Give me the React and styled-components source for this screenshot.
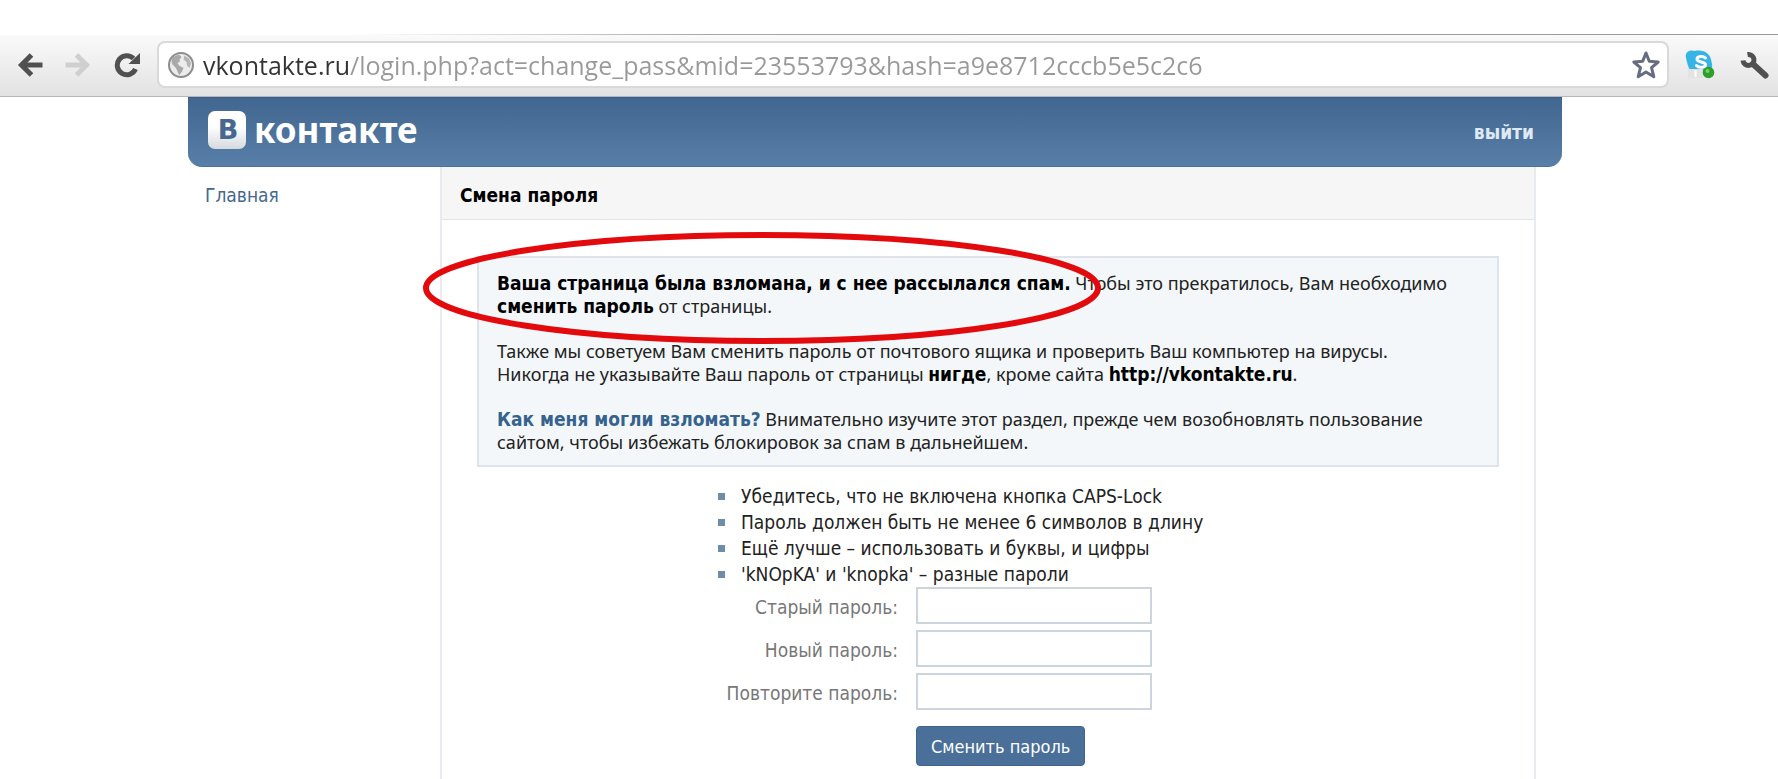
import { useState } from "react";
import styled, { createGlobalStyle } from "styled-components";

const GlobalStyle = createGlobalStyle`
  * {
    box-sizing: border-box;
  }

  body {
    margin: 0;
    background: #fff;
    color: #222;
    font-family: "DejaVu Sans Condensed", "Noto Sans", sans-serif;
    font-size: 19px;
    line-height: 23px;
  }
`;

const tips = [
  "Убедитесь, что не включена кнопка CAPS-Lock",
  "Пароль должен быть не менее 6 символов в длину",
  "Ещё лучше – использовать и буквы, и цифры",
  "'kNOpKA' и 'knopka' – разные пароли",
];

const fields = [
  { id: "old", label: "Старый пароль:" },
  { id: "new", label: "Новый пароль:" },
  { id: "repeat", label: "Повторите пароль:" },
];

const ArrowIcon = ({ flip }) => (
  <svg width="26" height="26" viewBox="0 0 26 26" fill="none" stroke="currentColor" strokeWidth="5">
    <g transform={flip ? "translate(26 0) scale(-1 1)" : undefined}>
      <path d="M4 13H25.500" />
      <path d="M14.500 3L4.500 13L14.500 23" />
    </g>
  </svg>
);

const ReloadIcon = () => (
  <svg width="28" height="26" viewBox="0 0 28 26">
    <path d="M20.500 6.500A9.500 9.500 0 1 0 22.500 17" fill="none" stroke="currentColor" strokeWidth="5" />
    <path d="M27 1V12H15.500Z" fill="currentColor" />
  </svg>
);

const GlobeIcon = () => (
  <svg width="28" height="28" viewBox="0 0 28 28">
    <circle cx="14" cy="14" r="12" fill="#ececec" stroke="#8d8d8d" strokeWidth="2" />
    <path
      d="M4.500 8.500C6.500 5 10 3.500 12.500 4L14.500 6L12.500 8.500L13 10.500L10.500 12L12 14.500L16.500 17L15 20.500L12.500 24C10.500 22 10.500 19 8.500 16.500L5 13Z"
      fill="#a9a9a9"
    />
    <path d="M17.500 4.500L22 7.500L24 12.500L22.500 17L20 14.500L19.500 11L16.500 8.500Z" fill="#b5b5b5" />
  </svg>
);

const StarIcon = () => (
  <svg width="30" height="30" viewBox="0 0 30 30">
    <path
      d="M15 3L18.300 11.300L27.200 12L20.500 17.700L22.800 26.700L15 22L7.200 26.700L9.500 17.700L2.800 12L11.700 11.300Z"
      fill="#fff"
      stroke="#686c80"
      strokeWidth="3"
      strokeLinejoin="round"
    />
  </svg>
);

const SkypeIcon = () => (
  <svg width="30" height="32" viewBox="0 0 30 32">
    <path
      d="M1 9C-0.500 3 5 0 9.500 2C19 0 26 5 26.500 13C28.500 18 26 23 21 23L5 21C3 18 2 13 1 9Z"
      fill="#36b4e5"
    />
    <path
      d="M20.500 9C18 6.500 12 7 12 10.200C12 13.700 20.500 12.200 20.500 15.700C20.500 19 13.500 19 11.500 16.500"
      fill="none"
      stroke="#fff"
      strokeWidth="3"
      strokeLinecap="round"
    />
    <rect x="3" y="20" width="15" height="9" rx="1" fill="#e3e3e3" />
    <path d="M10.500 21V28" stroke="#fff" strokeWidth="2" />
    <circle cx="23.500" cy="23.500" r="5.800" fill="#2f9e2b" />
    <circle cx="22.500" cy="22" r="2" fill="#77cf5f" />
  </svg>
);

const WrenchIcon = () => (
  <svg width="30" height="30" viewBox="0 0 30 30" fill="none" stroke="#505050">
    <path d="M13 14L25.500 25.500" strokeWidth="6" strokeLinecap="round" />
    <path d="M7.500 4.500A5.500 5.500 0 1 1 3 10.500" strokeWidth="5" />
  </svg>
);

const LogoMark = () => (
  <svg width="38" height="38" viewBox="0 0 38 38">
    <defs>
      <linearGradient id="markFill" x1="0" y1="0" x2="0" y2="1">
        <stop offset="0.4" stopColor="#fff" />
        <stop offset="1" stopColor="#d5dade" />
      </linearGradient>
    </defs>
    <rect width="38" height="38" rx="7" fill="url(#markFill)" />
    <text
      x="20"
      y="28"
      textAnchor="middle"
      fontFamily="'DejaVu Sans', sans-serif"
      fontWeight="bold"
      fontSize="27"
      fill="#456791"
    >
      В
    </text>
  </svg>
);

export default function App() {
  const [url, setUrl] = useState(
    "vkontakte.ru/login.php?act=change_pass&mid=23553793&hash=a9e8712cccb5e5c2c6"
  );
  const [values, setValues] = useState({ old: "", new: "", repeat: "" });

  const onChange = (e) => {
    setValues({ ...values, [e.target.name]: e.target.value });
  };

  return (
    <>
      <GlobalStyle />
      <Window>
        <TabStrip />
        <Toolbar>
          <NavButton aria-label="Назад"><ArrowIcon /></NavButton>
          <NavButton aria-label="Вперёд" disabled><ArrowIcon flip /></NavButton>
          <NavButton aria-label="Обновить"><ReloadIcon /></NavButton>
          <AddressBar>
            <GlobeIcon />
            <Address
              aria-label="Адрес"
              spellCheck="false"
              value={url}
              onChange={(e) => setUrl(e.target.value)}
            />
            <NavButton aria-label="Добавить в закладки"><StarIcon /></NavButton>
          </AddressBar>
          <NavButton $gap={25} aria-label="Skype"><SkypeIcon /></NavButton>
          <NavButton aria-label="Настройки"><WrenchIcon /></NavButton>
        </Toolbar>

        <Page>
          <Header>
            <Logo href="#">
              <LogoMark />
              контакте
            </Logo>
            <Logout href="#">выйти</Logout>
          </Header>
          <Body>
            <Sidebar>
              <a href="#">Главная</a>
            </Sidebar>
            <Panel>
              <PanelTitle>Смена пароля</PanelTitle>
              <Notice>
                <p>
                  <b>Ваша страница была взломана, и с нее рассылался спам.</b> Чтобы это прекратилось, Вам необходимо{" "}
                  <br />
                  <b>сменить пароль</b> от страницы.
                </p>
                <p>
                  Также мы советуем Вам сменить пароль от почтового ящика и проверить Ваш компьютер на вирусы.
                  <br />
                  Никогда не указывайте Ваш пароль от страницы <b>нигде</b>, кроме сайта <b>http://vkontakte.ru</b>.
                </p>
                <p>
                  <a href="#">Как меня могли взломать?</a> Внимательно изучите этот раздел, прежде чем возобновлять пользование
                  <br />
                  сайтом, чтобы избежать блокировок за спам в дальнейшем.
                </p>
                <Marker viewBox="0 0 678 112">
                  <ellipse cx="339" cy="56" rx="336" ry="53" />
                </Marker>
              </Notice>
              <Form onSubmit={(e) => e.preventDefault()}>
                <Tips>
                  {tips.map((tip) => (
                    <li key={tip}>{tip}</li>
                  ))}
                </Tips>
                {fields.map(({ id, label }) => (
                  <Field key={id}>
                    <label htmlFor={id}>{label}</label>
                    <Input id={id} name={id} type="password" value={values[id]} onChange={onChange} />
                  </Field>
                ))}
                <Submit type="submit">Сменить пароль</Submit>
              </Form>
            </Panel>
          </Body>
        </Page>
      </Window>
    </>
  );
}

const Window = styled.div`
  display: flex;
  flex-direction: column;
  min-height: 100vh;
`;

const TabStrip = styled.div`
  height: 35px;
  background: linear-gradient(to right, transparent 20%, #a9a3ad 40%, #9c969f) bottom / 100% 1px no-repeat;
`;

const Toolbar = styled.div`
  display: flex;
  align-items: center;
  height: 62px;
  padding: 0 8px 2px 17px;
  background: linear-gradient(#fafafa, #e2e2e2);
  border-bottom: 1px solid #b4b7bb;
`;

const NavButton = styled.button`
  display: flex;
  flex: none;
  margin: 0 ${({ $gap = 22 }) => $gap}px 0 0;
  padding: 0;
  border: none;
  background: none;
  color: #505050;
  cursor: pointer;

  &:disabled {
    color: #cfcfcf;
    cursor: default;
  }

  &:last-child {
    margin-right: 0;
  }
`;

const AddressBar = styled.div`
  flex: 1;
  display: flex;
  align-items: center;
  gap: 8px;
  height: 47px;
  margin: 0 16px 0 -6px;
  padding: 0 6px 0 8px;
  background: #fff;
  border: 2px solid #d8dad9;
  border-radius: 8px;
`;

const Address = styled.input`
  flex: 1;
  min-width: 0;
  padding: 0;
  border: none;
  outline: none;
  background: linear-gradient(to right, #333 146px, #999 146px);
  background-clip: text;
  color: transparent;
  caret-color: #333;
  font-family: "Open Sans", "Noto Sans", sans-serif;
  font-size: 25px;
  line-height: 36px;
`;

const Page = styled.div`
  flex: 1;
  display: flex;
  flex-direction: column;
  width: 100%;
  max-width: 1402px;
  margin: 0 auto;
  padding-right: 28px;
`;

const Header = styled.header`
  display: flex;
  justify-content: space-between;
  align-items: center;
  height: 70px;
  padding: 0 28px 4px 20px;
  background: linear-gradient(#416690, #587fa8);
  border-top: 1px solid #3c5b85;
  border-bottom: 1px solid #4b719b;
  border-radius: 0 0 14px 14px;
`;

const Logo = styled.a`
  display: flex;
  align-items: center;
  gap: 8px;
  color: #fff;
  font-family: "Noto Sans", sans-serif;
  font-size: 35px;
  font-weight: bold;
  line-height: 38px;
  text-decoration: none;
`;

const Logout = styled.a`
  padding-top: 4px;
  color: #dfe9f3;
  font-weight: bold;
  text-decoration: none;
`;

const Body = styled.div`
  flex: 1;
  display: flex;
  padding-right: 26px;
`;

const Sidebar = styled.nav`
  flex: none;
  width: 252px;
  padding: 17px;

  a {
    color: #45688e;
    text-decoration: none;
  }
`;

const Panel = styled.main`
  flex: 1;
  min-width: 0;
  padding-bottom: 12px;
  border: 2px solid #e8ebf0;
  border-top: none;
  border-bottom: none;
`;

const PanelTitle = styled.h1`
  margin: 0;
  padding: 17px 18px 12px;
  background: #f6f6f7;
  border-bottom: 1px solid #e0e3e8;
  color: #000;
  font-size: 19px;
  line-height: 23px;
`;

const Notice = styled.section`
  position: relative;
  margin: 36px 35px 16px;
  padding: 14px 18px 11px;
  background: #f3f7f9;
  border: 2px solid #dfe3ea;
  font-family: "Noto Sans", sans-serif;
  font-size: 18px;

  p {
    margin: 0 0 22px;
  }

  p:last-of-type {
    margin: 0;
  }

  b,
  a {
    font-family: "DejaVu Sans Condensed", sans-serif;
    font-size: 19px;
    font-weight: bold;
  }

  b {
    color: #000;
  }

  a {
    color: #36638e;
    text-decoration: none;
  }
`;

// hand-drawn highlight over the first paragraph
const Marker = styled.svg`
  position: absolute;
  top: -26px;
  left: -56px;
  width: 678px;
  height: 112px;
  pointer-events: none;

  ellipse {
    fill: none;
    stroke: #e20a0d;
    stroke-width: 6px;
  }
`;

const Form = styled.form`
  width: 100%;
  max-width: 560px;
  margin: 0 auto;
`;

const Tips = styled.ul`
  margin: 0;
  padding: 0 0 0 10px;
  list-style: none;
  line-height: 26px;

  li {
    display: flex;
    align-items: center;
    gap: 16px;
  }

  li::before {
    content: "";
    width: 7px;
    height: 7px;
    background: #6d8dab;
  }
`;

const Field = styled.div`
  display: grid;
  grid-template-columns: 190px 236px;
  gap: 18px;
  align-items: center;
  margin-bottom: 6px;

  label {
    padding-top: 4px;
    color: #777;
    text-align: right;
  }
`;

const Input = styled.input`
  height: 37px;
  padding: 0 8px;
  border: 2px solid #ccd5de;
  background: #fff;
  font-family: inherit;
  font-size: 18px;
`;

const Submit = styled.button`
  height: 40px;
  margin: 10px 0 0 208px;
  padding: 0 14px;
  border: 1px solid #3f658f;
  border-radius: 4px;
  background: #4a6f98;
  color: #fff;
  font-family: inherit;
  font-size: 18px;
  cursor: pointer;
`;
